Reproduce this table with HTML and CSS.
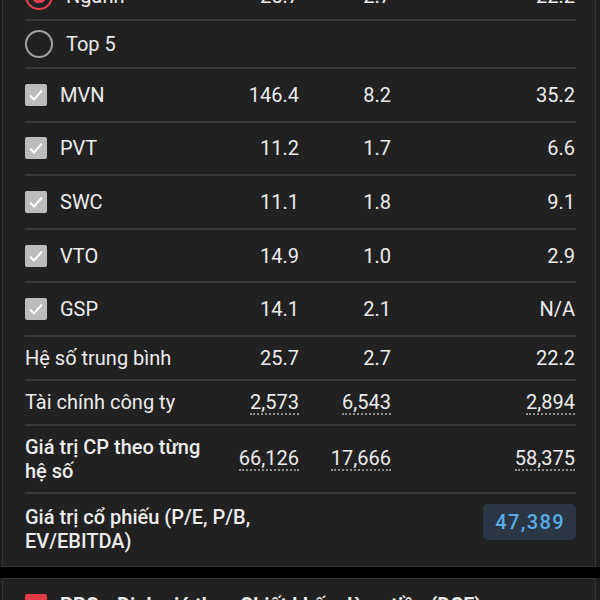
FILE: index.html
```html
<!DOCTYPE html>
<html lang="vi">
<head>
<meta charset="utf-8">
<link rel="stylesheet" href="styles.css">
</head>
<body>
<div class="card card-main">
  <div class="row row-radio">
    <div class="label"><span class="radio radio-on"></span><span class="name">Ngành</span></div>
    <div class="num">25.7</div><div class="num">2.7</div><div class="num">22.2</div>
  </div>
  <div class="row row-radio">
    <div class="label"><span class="radio"></span><span class="name">Top 5</span></div>
  </div>
  <div class="row row-check">
    <div class="label"><span class="check"><svg viewBox="0 0 22 22"><path d="M5 11.5l4 4 8-9" fill="none" stroke="#fff" stroke-width="2"/></svg></span><span class="code">MVN</span></div>
    <div class="num">146.4</div><div class="num">8.2</div><div class="num">35.2</div>
  </div>
  <div class="row row-check">
    <div class="label"><span class="check"><svg viewBox="0 0 22 22"><path d="M5 11.5l4 4 8-9" fill="none" stroke="#fff" stroke-width="2"/></svg></span><span class="code">PVT</span></div>
    <div class="num">11.2</div><div class="num">1.7</div><div class="num">6.6</div>
  </div>
  <div class="row row-check">
    <div class="label"><span class="check"><svg viewBox="0 0 22 22"><path d="M5 11.5l4 4 8-9" fill="none" stroke="#fff" stroke-width="2"/></svg></span><span class="code">SWC</span></div>
    <div class="num">11.1</div><div class="num">1.8</div><div class="num">9.1</div>
  </div>
  <div class="row row-check">
    <div class="label"><span class="check"><svg viewBox="0 0 22 22"><path d="M5 11.5l4 4 8-9" fill="none" stroke="#fff" stroke-width="2"/></svg></span><span class="code">VTO</span></div>
    <div class="num">14.9</div><div class="num">1.0</div><div class="num">2.9</div>
  </div>
  <div class="row row-check">
    <div class="label"><span class="check"><svg viewBox="0 0 22 22"><path d="M5 11.5l4 4 8-9" fill="none" stroke="#fff" stroke-width="2"/></svg></span><span class="code">GSP</span></div>
    <div class="num">14.1</div><div class="num">2.1</div><div class="num">N/A</div>
  </div>
  <div class="row row-avg">
    <div class="label">Hệ số trung bình</div>
    <div class="num">25.7</div><div class="num">2.7</div><div class="num">22.2</div>
  </div>
  <div class="row row-fin">
    <div class="label">Tài chính công ty</div>
    <div class="num"><span class="dot">2,573</span></div><div class="num"><span class="dot">6,543</span></div><div class="num"><span class="dot">2,894</span></div>
  </div>
  <div class="row row-val">
    <div class="label strong">Giá trị CP theo từng hệ số</div>
    <div class="num"><span class="dot">66,126</span></div><div class="num"><span class="dot">17,666</span></div><div class="num"><span class="dot">58,375</span></div>
  </div>
  <div class="row row-total">
    <div class="label strong wrap">Giá trị cổ phiếu (P/E, P/B, EV/EBITDA)</div>
    <div class="total">47,389</div>
  </div>
</div>
<div class="band"></div>
<div class="card card-next">
  <div class="head"><span class="check red"></span><span class="title">PPC - Định giá theo Chiết khấu dòng tiền (DCF)</span></div>
</div>
</body>
</html>
```
FILE: styles.css
```css
html, body {
  margin: 0;
  padding: 0;
  background: #1d1d1d;
  font-family: Roboto, "Noto Sans", sans-serif;
  color: #ececec;
  font-size: 20px;
  overflow: hidden;
}
.card {
  background: #212121;
  border: 1px solid #333;
  margin: 0 4px 0 2px;
  padding: 0 19px 0 22px;
}
.card-main {
  margin-top: -27px;
  border-top: none;
}
.row {
  display: grid;
  grid-template-columns: 184px 90px 92px 184px;
  align-items: center;
  border-bottom: 2px solid #393939;
  box-sizing: border-box;
}
.row-radio { height: 48px; }
.row-check { height: 53.6px; }
.row-avg { height: 44px; }
.row-fin { height: 45px; }
.row-val { height: 68px; }
.row-total {
  height: 72px;
  border-bottom: none;
  grid-template-columns: 1fr auto;
  align-items: start;
  padding-top: 10px;
}
.label {
  display: flex;
  align-items: center;
  line-height: 24px;
}
.strong { font-weight: 500; }
.row-total .label { padding-top: 1px; max-width: 260px; }
.num {
  text-align: right;
  line-height: 24px;
}
.dot {
  display: inline-block;
  line-height: 22px;
  border-bottom: 2px dotted #8d8d8d;
}
.radio {
  width: 28px;
  height: 28px;
  box-sizing: border-box;
  border: 2.5px solid #a2a2a2;
  border-radius: 50%;
  margin-right: 13px;
  flex: none;
}
.radio-on {
  border-color: #e8404e;
  background: radial-gradient(circle, #e8404e 0 7px, transparent 7.5px);
}
.check {
  width: 22px;
  height: 22px;
  background: #bcbcbc;
  border-radius: 2px;
  margin-right: 13px;
  flex: none;
  display: flex;
}
.check svg { width: 22px; height: 22px; }
.check.red { background: #e43a47; }
.total {
  background: #2a3643;
  color: #5aabe8;
  font-weight: 500;
  letter-spacing: 1.4px;
  border-radius: 5px;
  height: 36px;
  line-height: 36px;
  padding: 0 11px 0 12px;
}
.band {
  height: 11px;
  background: #000;
}
.card-next {
  height: 60px;
  border-bottom: none;
}
.head {
  display: flex;
  align-items: center;
  padding-top: 14px;
  font-weight: 700;
}
.head .title { white-space: nowrap; }
```
